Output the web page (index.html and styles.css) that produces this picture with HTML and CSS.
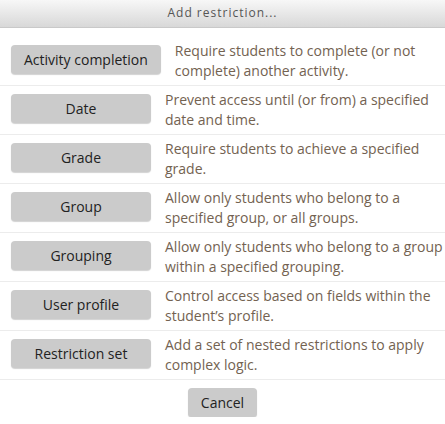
FILE: index.html
```html
<!DOCTYPE html>
<html>
<head>
<meta charset="utf-8">
<link rel="stylesheet" href="styles.css">
</head>
<body>
<div class="dialog">
  <div class="header">Add restriction...</div>
  <div class="content">
    <div class="row"><button class="btn">Activity completion</button><div class="desc">Require students to complete (or not complete) another activity.</div></div>
    <div class="row"><button class="btn">Date</button><div class="desc">Prevent access until (or from) a specified date and time.</div></div>
    <div class="row"><button class="btn">Grade</button><div class="desc">Require students to achieve a specified grade.</div></div>
    <div class="row"><button class="btn">Group</button><div class="desc">Allow only students who belong to a specified group, or all groups.</div></div>
    <div class="row"><button class="btn">Grouping</button><div class="desc">Allow only students who belong to a group within a specified grouping.</div></div>
    <div class="row"><button class="btn">User profile</button><div class="desc">Control access based on fields within the student’s profile.</div></div>
    <div class="row"><button class="btn">Restriction set</button><div class="desc">Add a set of nested restrictions to apply complex logic.</div></div>
  </div>
  <div class="footer"><button class="btn cancel">Cancel</button></div>
</div>
</body>
</html>
```
FILE: styles.css
```css
html, body {
  margin: 0;
  padding: 0;
  background: #fff;
}
body {
  font-family: "Open Sans", "DejaVu Sans", sans-serif;
  font-size: 14px;
}
.dialog {
  width: 445px;
}
.header {
  height: 27px;
  border-bottom: 1px solid #c9c9c9;
  background: linear-gradient(#f7f7f7, #d8d8d8);
  color: #555;
  font-size: 12px;
  letter-spacing: 1px;
  line-height: 26px;
  text-align: center;
}
.content {
  padding-top: 9px;
}
.row {
  display: flex;
  align-items: flex-start;
  gap: 14px;
  padding: 4px 0 4px 11px;
  border-bottom: 1px solid #ececec;
}
.btn {
  font-family: "Open Sans", "DejaVu Sans", sans-serif;
  font-size: 14px;
  color: #222;
  background: #cbcbcb;
  border: none;
  border-radius: 4px;
  box-shadow: 0 1px 1px rgba(0, 0, 0, 0.18);
  height: 29px;
  min-width: 140px;
  padding: 0 13px;
  margin-top: 4px;
  flex: none;
  white-space: nowrap;
}
.desc {
  color: #736251;
  line-height: 20px;
  flex: 1;
}
.footer {
  display: flex;
  justify-content: center;
  padding-top: 4px;
}
.cancel {
  min-width: 0;
  width: 69px;
  padding: 0;
}
```
